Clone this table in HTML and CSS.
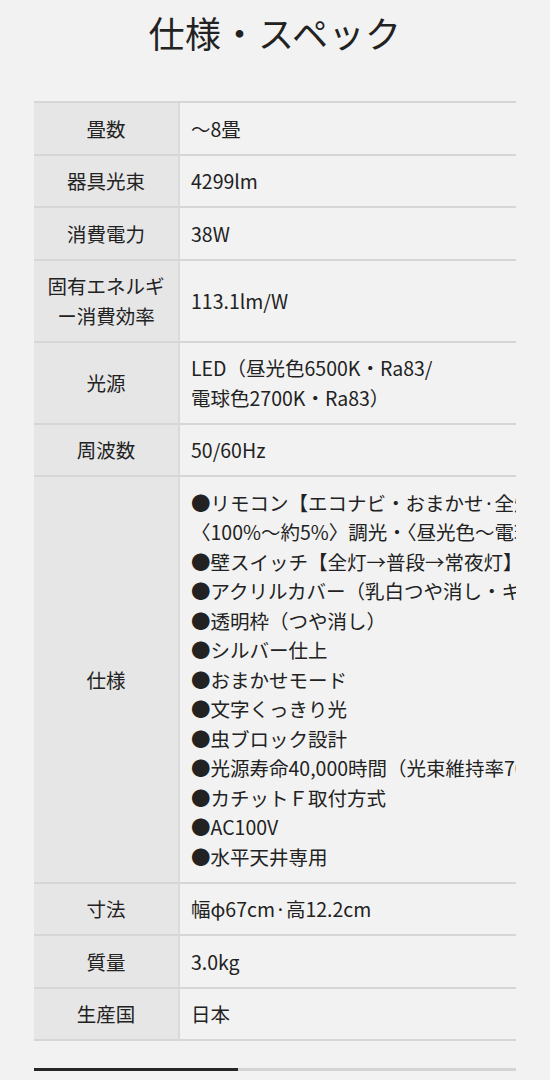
FILE: index.html
```html
<!DOCTYPE html>
<html lang="ja">
<head>
<meta charset="utf-8">
<title>仕様・スペック</title>
<link rel="stylesheet" href="styles.css">
</head>
<body>
<section class="spec">
  <h1 class="spec-title">仕様・スペック</h1>
  <div class="spec-scroll">
    <table class="spec-table">
      <tbody>
        <tr><th>畳数</th><td>〜8畳</td></tr>
        <tr><th>器具光束</th><td>4299lm</td></tr>
        <tr><th>消費電力</th><td>38W</td></tr>
        <tr><th>固有エネルギー消費効率</th><td>113.1lm/W</td></tr>
        <tr><th>光源</th><td>LED（昼光色6500K・Ra83/<br>電球色2700K・Ra83）</td></tr>
        <tr><th>周波数</th><td>50/60Hz</td></tr>
        <tr><th>仕様</th><td>●リモコン【エコナビ・おまかせ·全灯・常夜灯・留守番・おやすみ・タイマー】<br>〈100%〜約5%〉調光・〈昼光色〜電球色〉調色<br>●壁スイッチ【全灯→普段→常夜灯】<br>●アクリルカバー（乳白つや消し・キズ防止）<br>●透明枠（つや消し）<br>●シルバー仕上<br>●おまかせモード<br>●文字くっきり光<br>●虫ブロック設計<br>●光源寿命40,000時間（光束維持率70%）<br>●カチットＦ取付方式<br>●AC100V<br>●水平天井専用</td></tr>
        <tr><th>寸法</th><td>幅φ67cm·高12.2cm</td></tr>
        <tr><th>質量</th><td>3.0kg</td></tr>
        <tr><th>生産国</th><td>日本</td></tr>
      </tbody>
    </table>
  </div>
  <div class="spec-scrollbar"><div class="spec-scrollbar-thumb" style="width: 42.3%"></div></div>
</section>
</body>
</html>
```

FILE: styles.css
```css
html, body {
  margin: 0;
  padding: 0;
  background: #f2f2f2;
}

body {
  font-family: "Noto Sans CJK JP", "Noto Sans", sans-serif;
  color: #222;
}

.spec {
  padding: 8px 34px 0;
}

.spec-title {
  margin: 0 0 45px;
  font-size: 36px;
  line-height: 48px;
  font-weight: 400;
  text-align: center;
  letter-spacing: 0.5px;
}

.spec-scroll {
  overflow: hidden;
}

.spec-scrollbar {
  margin-top: 27px;
  height: 3px;
  background: #d4d4d4;
}

.spec-scrollbar-thumb {
  height: 100%;
  background: #262626;
}

.spec-table {
  width: 1140px;
  border-collapse: separate;
  border-spacing: 0;
  border-top: 2px solid #d6d6d6;
  font-size: 19.5px;
  line-height: 29.5px;
}

.spec-table th,
.spec-table td {
  padding: 10.5px 11px;
  border-bottom: 2px solid #d6d6d6;
  vertical-align: middle;
  white-space: nowrap;
}

.spec-table th {
  width: 122px;
  background: #e6e6e6;
  border-right: 2px solid #dadada;
  font-weight: 400;
  text-align: center;
  white-space: normal;
}

.spec-table td {
  text-align: left;
}
```
